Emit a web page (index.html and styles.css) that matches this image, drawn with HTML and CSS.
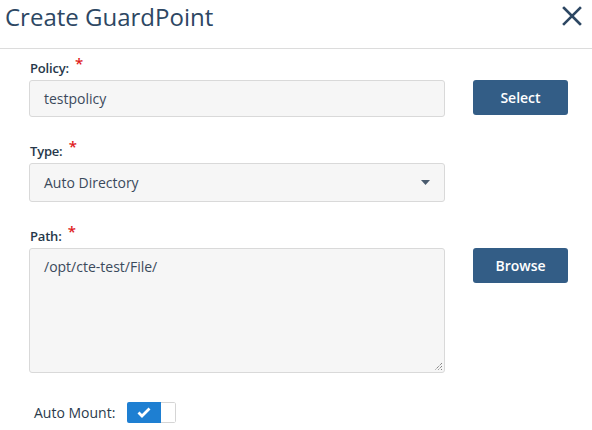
FILE: index.html
```html
<!DOCTYPE html>
<html>
<head>
<meta charset="utf-8">
<link rel="stylesheet" href="styles.css">
</head>
<body>
<div class="dialog">
  <header class="head">
    <h1 class="title">Create GuardPoint</h1>
    <button class="close" aria-label="Close">
      <svg width="20" height="20" viewBox="0 0 20 20"><path d="M2 2 L18 18 M18 2 L2 18" stroke="#2d4763" stroke-width="2.6" stroke-linecap="square"/></svg>
    </button>
  </header>
  <div class="body">
    <div class="field">
      <label class="label">Policy: <span class="req">*</span></label>
      <div class="row">
        <div class="input">testpolicy</div>
        <button class="btn">Select</button>
      </div>
    </div>
    <div class="field">
      <label class="label">Type: <span class="req">*</span></label>
      <div class="row">
        <div class="input select">Auto Directory
          <svg class="caret" width="9" height="5" viewBox="0 0 9 5"><path d="M0 0 H9 L4.5 5 Z" fill="#4a5b6e"/></svg>
        </div>
      </div>
    </div>
    <div class="field">
      <label class="label">Path: <span class="req">*</span></label>
      <div class="row">
        <div class="input area">/opt/cte-test/File/
          <svg class="grip" width="9" height="9" viewBox="0 0 9 9"><path d="M8 1 L1 8 M8 4 L4 8 M8 7 L7 8" stroke="#555" stroke-width="1" stroke-dasharray="1 1"/></svg>
        </div>
        <button class="btn">Browse</button>
      </div>
    </div>
    <div class="mount">
      <span class="mlabel">Auto Mount:</span>
      <span class="toggle">
        <span class="on">
          <svg width="14" height="11" viewBox="0 0 14 11"><path d="M1.5 5.5 L5 9 L12.5 1.5" fill="none" stroke="#fff" stroke-width="2.8"/></svg>
        </span>
        <span class="knob"></span>
      </span>
    </div>
  </div>
</div>
</body>
</html>
```
FILE: styles.css
```css
* { box-sizing: border-box; }
body {
  margin: 0;
  background: #fff;
  font-family: "Open Sans", "Noto Sans", sans-serif;
  color: #2b3b4c;
}
.dialog { width: 592px; height: 430px; overflow: hidden; }
.head {
  display: flex;
  justify-content: space-between;
  align-items: center;
  height: 49px;
  padding: 0 10px 2px 5px;
  border-bottom: 1px solid #dcdcdc;
}
.title {
  margin: 0;
  font-size: 24px;
  font-weight: 400;
  color: #2d4763;
  line-height: 30px;
  margin-top: -12px;
}
.close {
  border: 0;
  background: none;
  padding: 0;
  width: 20px;
  height: 20px;
  margin-top: -15px;
}
.body { padding: 10px 0 0 29px; }
.field { margin-bottom: 25px; }
.label {
  display: block;
  font-size: 13px;
  line-height: 18px;
  height: 18px;
  font-weight: 600;
  color: #26384a;
  padding-left: 1px;
  margin-bottom: 3px;
  letter-spacing: -0.2px;
}
.req { color: #e01b1b; font-size: 15px; line-height: 0; position: relative; top: -4px; margin-left: 3px; }
.row { display: flex; align-items: flex-start; gap: 28px; }
.input {
  width: 416px;
  height: 37px;
  background: #f6f6f6;
  border: 1px solid #d9d9d9;
  border-radius: 3px;
  padding: 0 14px;
  font-size: 14px;
  line-height: 35px;
  color: #3b4a5c;
  position: relative;
}
.select { height: 39px; line-height: 37px; }
.caret { position: absolute; right: 14px; top: 16px; }
.area { height: 125px; line-height: 36px; }
.grip { position: absolute; right: 1px; bottom: 1px; }
.btn {
  width: 95px;
  height: 35px;
  border: 0;
  border-radius: 3px;
  background: #335d86;
  color: #fff;
  font-family: "Open Sans", sans-serif;
  font-weight: 600;
  font-size: 14px;
  padding: 0;
}
.mount { display: flex; align-items: center; padding-left: 5px; margin-top: 29px; }
.mlabel { font-size: 14px; color: #2b3b4c; margin-right: 12px; }
.toggle {
  display: inline-flex;
  width: 49px;
  height: 21px;
  border-radius: 2px;
  overflow: hidden;
}
.on {
  width: 34px;
  background: #1e7fd2;
  display: flex;
  align-items: center;
  justify-content: center;
}
.knob {
  width: 15px;
  background: #fff;
  border: 1px solid #d5d5d5;
  border-left: 0;
  border-radius: 0 2px 2px 0;
}
```
